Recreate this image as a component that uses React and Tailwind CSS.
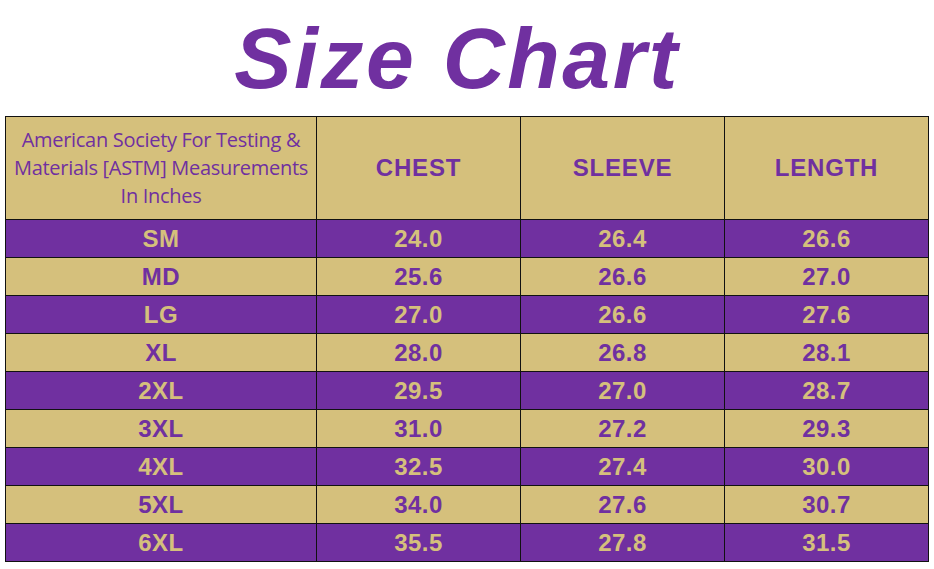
import React from "react";

const rows = [
  ["SM", "24.0", "26.4", "26.6"],
  ["MD", "25.6", "26.6", "27.0"],
  ["LG", "27.0", "26.6", "27.6"],
  ["XL", "28.0", "26.8", "28.1"],
  ["2XL", "29.5", "27.0", "28.7"],
  ["3XL", "31.0", "27.2", "29.3"],
  ["4XL", "32.5", "27.4", "30.0"],
  ["5XL", "34.0", "27.6", "30.7"],
  ["6XL", "35.5", "27.8", "31.5"],
];

export default function App() {
  return (
    <div className="w-[934px] h-[569px] bg-white overflow-hidden" style={{ fontFamily: '"Liberation Sans", Arial, sans-serif' }}>
      <div className="h-[116px] flex justify-center">
        <h1 className="mt-[8px] ml-[-20px] text-[86px] leading-[100px] font-bold italic text-[#7030a0] tracking-[2.5px]">
          Size Chart
        </h1>
      </div>
      <div className="pl-[5px]">
        <table className="table-fixed border-collapse w-[923px]">
          <colgroup>
            <col className="w-[311px]" />
            <col className="w-[204px]" />
            <col className="w-[204px]" />
            <col className="w-[204px]" />
          </colgroup>
          <thead>
            <tr className="h-[103px] bg-[#d5c07c]">
              <th className="border-[1.5px] border-[#111] font-normal text-[#7030a0] text-[20px] leading-[28px] px-0" style={{ fontFamily: '"Open Sans", sans-serif' }}>
                <div className="tracking-[-0.3px] whitespace-nowrap">American Society For Testing &amp;</div>
                <div className="tracking-[-0.3px] whitespace-nowrap">Materials [ASTM] Measurements</div>
                <div className="tracking-[-0.3px] whitespace-nowrap">In Inches</div>
              </th>
              {["CHEST", "SLEEVE", "LENGTH"].map((h) => (
                <th key={h} className="border-[1.5px] border-[#111] font-bold text-[#7030a0] text-[24px] tracking-[0.8px]">
                  {h}
                </th>
              ))}
            </tr>
          </thead>
          <tbody>
            {rows.map((r, i) => {
              const purple = i % 2 === 0;
              return (
                <tr key={r[0]} className={purple ? "h-[38px] bg-[#7030a0] text-[#d5c07c]" : "h-[38px] bg-[#d5c07c] text-[#7030a0]"}>
                  {r.map((c, j) => (
                    <td key={j} className="border-[1.5px] border-[#111] text-center font-bold text-[24px] leading-[28px] pt-[1px] tracking-[0.5px]">
                      {c}
                    </td>
                  ))}
                </tr>
              );
            })}
          </tbody>
        </table>
      </div>
    </div>
  );
}
